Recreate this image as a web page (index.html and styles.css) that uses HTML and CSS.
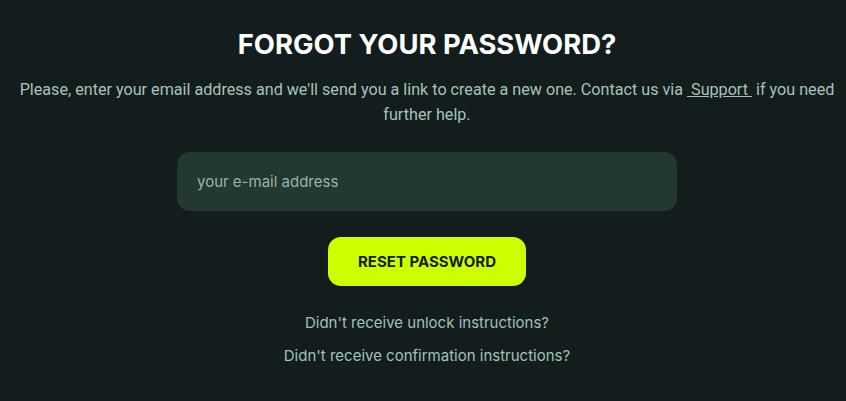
FILE: index.html
```html
<!DOCTYPE html>
<html lang="en">
<head>
<meta charset="utf-8">
<link rel="stylesheet" href="styles.css">
</head>
<body>
<main class="page">
  <h1 class="title">FORGOT YOUR PASSWORD?</h1>
  <p class="intro">Please, enter your email address and we'll send you a link to create a new one. Contact us via <a class="support" href="#">&nbsp;Support&nbsp;</a> if you need further help.</p>
  <form class="form">
    <input class="email" type="email" placeholder="your e-mail address">
    <button class="submit" type="button">RESET PASSWORD</button>
  </form>
  <nav class="links">
    <a href="#">Didn't receive unlock instructions?</a>
    <a href="#">Didn't receive confirmation instructions?</a>
  </nav>
</main>
</body>
</html>
```
FILE: styles.css
```css
html, body {
  margin: 0;
  padding: 0;
  background: #131d1d;
}
.page {
  display: flex;
  flex-direction: column;
  align-items: center;
  padding: 26px 0 0 8px;
  font-family: Inter, "Noto Sans", sans-serif;
}
.title {
  margin: 0;
  font-size: 27.4px;
  line-height: 36px;
  font-weight: 700;
  color: #ffffff;
  letter-spacing: 0;
}
.intro {
  margin: 15px 0 0;
  font-family: Roboto, sans-serif;
  font-size: 16.15px;
  line-height: 25px;
  color: #a5c4b8;
  text-align: center;
}
.support {
  color: #a5c4b8;
  text-decoration: underline;
}
.form {
  display: flex;
  flex-direction: column;
  align-items: center;
  margin-top: 25px;
}
.email {
  box-sizing: border-box;
  width: 500px;
  height: 59px;
  border: none;
  border-radius: 13px;
  background: #223830;
  padding: 0 20px;
  font-family: Inter, sans-serif;
  font-size: 15px;
  color: #c8dcd4;
  outline: none;
}
.email::placeholder {
  color: #96b5a9;
}
.submit {
  margin-top: 26px;
  width: 198px;
  height: 49px;
  border: none;
  border-radius: 13px;
  background: #ccff00;
  color: #14201c;
  font-family: Inter, sans-serif;
  font-weight: 700;
  font-size: 15px;
}
.links {
  display: flex;
  flex-direction: column;
  align-items: center;
  gap: 15px;
  margin-top: 28px;
}
.links a {
  font-size: 15px;
  line-height: 18px;
  color: #a0c3b6;
  text-decoration: none;
}
```
